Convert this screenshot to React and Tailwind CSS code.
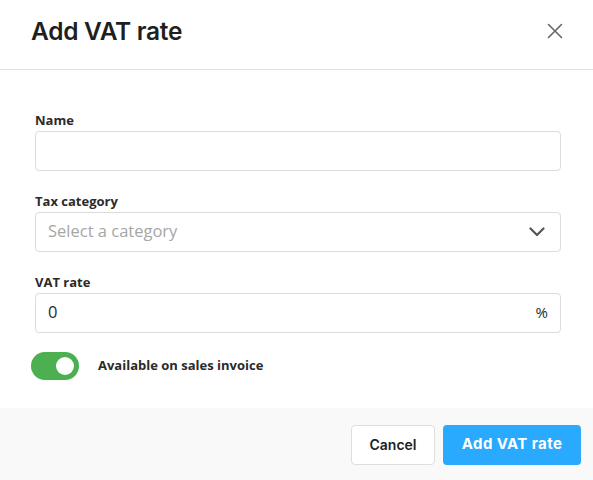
import React from "react";

export default function App() {
  return (
    <div className="w-[593px] h-[480px] bg-white flex flex-col overflow-hidden">
      <div className="h-[70px] shrink-0 border-b border-[#e0e0e0] flex items-center justify-between pl-[31px] pr-[30px]">
        <h1 className="text-[24.5px] font-semibold text-[#1f1f1f] font-['Inter',sans-serif] tracking-[-0.3px] leading-none pb-[6px]">Add VAT rate</h1>
        <svg width="16" height="16" viewBox="0 0 16 16" className="text-[#666] mb-[8px]">
          <path d="M1.5 1.5 L14.5 14.5 M14.5 1.5 L1.5 14.5" stroke="currentColor" strokeWidth="1.6" strokeLinecap="round" />
        </svg>
      </div>
      <div className="flex-1 flex flex-col px-[35px] pt-[42px] font-['Open_Sans',sans-serif]">
        <label className="text-[13px] font-bold text-[#2a2a2a] leading-[16px] mb-[3px]">Name</label>
        <div className="h-[40px] w-[526px] border border-[#dcdcdc] rounded-[4px]" />
        <label className="mt-[22px] text-[13px] font-bold text-[#2a2a2a] leading-[16px] mb-[3px]">Tax category</label>
        <div className="h-[40px] w-[526px] border border-[#dcdcdc] rounded-[4px] flex items-center justify-between pl-[12px] pr-[15px]">
          <span className="text-[16.5px] text-[#a6a6a6] leading-none pb-[2px]">Select a category</span>
          <svg width="16" height="10" viewBox="0 0 16 10">
            <path d="M1.5 1.5 L8 8 L14.5 1.5" fill="none" stroke="#555" strokeWidth="2.2" strokeLinecap="round" strokeLinejoin="round" />
          </svg>
        </div>
        <label className="mt-[22px] text-[13px] font-bold text-[#2a2a2a] leading-[16px] mb-[3px]">VAT rate</label>
        <div className="h-[40px] w-[526px] border border-[#dcdcdc] rounded-[4px] flex items-center justify-between pl-[12px] pr-[12px]">
          <span className="text-[16.5px] text-[#2a2a2a] leading-none pb-[2px]">0</span>
          <span className="text-[15px] text-[#2a2a2a] leading-none pb-[2px]">%</span>
        </div>
        <div className="mt-[19px] flex items-center -ml-[4px]">
          <div className="w-[48px] h-[28px] rounded-full bg-[#4caf50] flex items-center justify-end pr-[5px]">
            <div className="w-[18px] h-[18px] rounded-full bg-white" />
          </div>
          <span className="ml-[19px] text-[13px] font-bold text-[#2a2a2a]">Available on sales invoice</span>
        </div>
      </div>
      <div className="h-[72px] shrink-0 bg-[#f9f9f9] flex items-center justify-end gap-[8px] pr-[12px] pt-[1px] font-['Inter',sans-serif]">
        <button className="h-[40px] w-[84px] rounded-[4px] border border-[#dedede] bg-white text-[14px] font-semibold text-[#222]">Cancel</button>
        <button className="h-[40px] w-[138px] rounded-[4px] bg-[#29aaff] text-[15px] font-bold text-white tracking-[0.4px]">Add VAT rate</button>
      </div>
    </div>
  );
}
